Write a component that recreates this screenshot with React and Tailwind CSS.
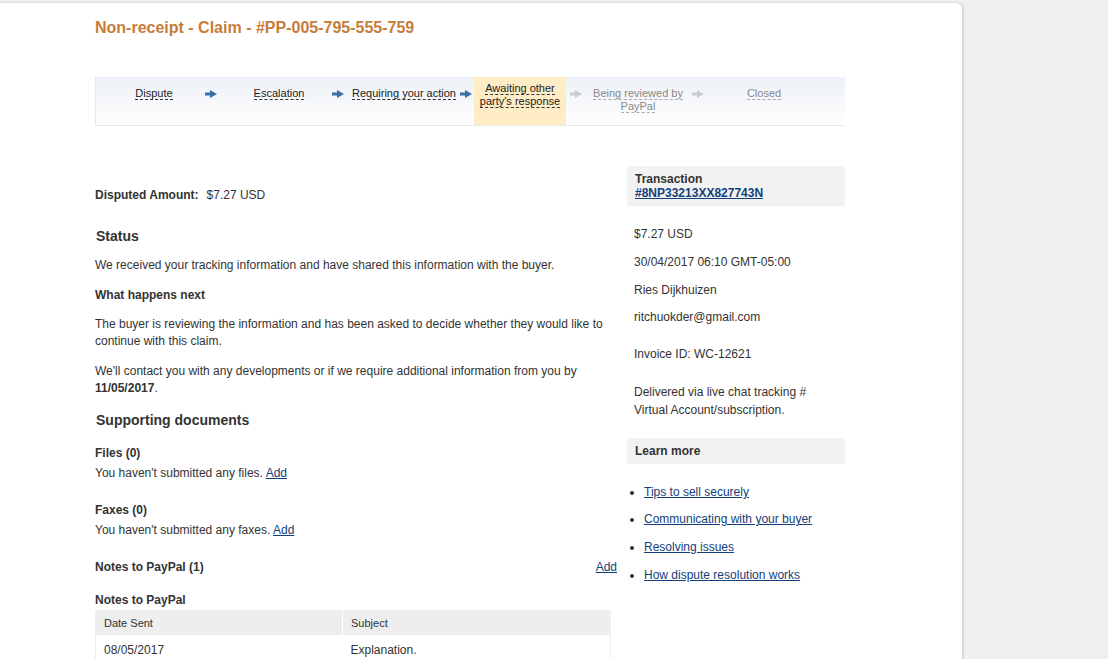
import React from 'react';

const steps = [
    { label: 'Dispute', w: 'w-[72px]', done: true },
    { arrow: true, w: 'w-[42px]', done: true },
    { label: 'Escalation', w: 'w-[94px]', done: true },
    { arrow: true, w: 'w-[24px]', done: true },
    { label: 'Requiring your action', w: 'w-[108px]', done: true },
    { arrow: true, w: 'w-[16px]', done: true },
    { label: ['Awaiting other', "party's response"], w: 'w-[92px]', done: true, current: true },
    { arrow: true, w: 'w-[20px]', done: false },
    { label: ['Being reviewed by', 'PayPal'], w: 'w-[104px]', done: false },
    { arrow: true, w: 'w-[16px]', done: false },
    { label: 'Closed', w: 'w-[116px]', done: false },
];

function Arrow({ done }) {
    const c = done ? '#3b6fa8' : '#c9ccd1';
    return (
        <svg width="12" height="8" viewBox="0 0 12 8">
            <rect x="0" y="2.5" width="6" height="3" fill={c} />
            <path d="M5 0 L12 4 L5 8 Z" fill={c} />
        </svg>
    );
}

function Step({ s }) {
    if (s.arrow) {
        return (
            <div className={`${s.w} flex justify-center pt-[13px]`}>
                <Arrow done={s.done} />
            </div>
        );
    }
    const lines = Array.isArray(s.label) ? s.label : [s.label];
    const color = s.done ? 'text-[#222] border-[#333]' : 'text-[#888] border-[#aaa]';
    return (
        <div
            className={`${s.w} flex flex-col items-center text-center text-[11px] leading-[12px] ${
                s.current ? 'bg-[#fdecc6] pt-[5px]' : 'pt-[10px]'
            }`}
        >
            {lines.map(l => (
                <span key={l} className={`border-b border-dashed ${color}`}>{l}</span>
            ))}
        </div>
    );
}

const Link = ({ children }) => (
    <a href="#" className="text-[#13407a] underline underline-offset-1">{children}</a>
);

export default function App() {
    return (
        <div className="min-h-screen bg-[#f0f0f0] pt-[3px]" style={{ fontFamily: '"Liberation Sans", Arial, sans-serif' }}>
            <div className="w-[962px] min-h-[656px] bg-white rounded-tr-[6px] shadow-[1px_0_3px_rgba(0,0,0,0.18)] pl-[95px] pt-[15px] text-[12px] text-[#333]">
                <h1 className="text-[16px] leading-[20px] font-bold text-[#c77c3a]">
                    Non-receipt - Claim - #PP-005-795-555-759
                </h1>

                <div className="mt-[39px] w-[750px] h-[49px] flex pl-[22px] border-l border-b border-[#e8e8e8] bg-gradient-to-b from-[#edf1f7] to-white">
                    {steps.map((s, i) => <Step key={i} s={s} />)}
                </div>

                <div className="mt-[40px] flex">
                    <div className="w-[520px] pt-[21px]">
                        <div className="leading-[16px]">
                            <span className="font-bold">Disputed Amount:</span>
                            <span className="ml-[8px]">$7.27 USD</span>
                        </div>

                        <h2 className="mt-[24px] pl-[1px] text-[14px] leading-[18px] font-bold">Status</h2>
                        <p className="mt-[12px] leading-[16px]">
                            We received your tracking information and have shared this information with the buyer.
                        </p>
                        <h3 className="mt-[14px] leading-[16px] font-bold">What happens next</h3>
                        <p className="mt-[13px] leading-[17px]">
                            The buyer is reviewing the information and has been asked to decide whether they would like to continue with this claim.
                        </p>
                        <p className="mt-[13px] leading-[17px] pr-[10px]">
                            We'll contact you with any developments or if we require additional information from you by{' '}
                            <span className="font-bold">11/05/2017</span>.
                        </p>

                        <h2 className="mt-[14px] pl-[1px] text-[14px] leading-[18px] font-bold">Supporting documents</h2>

                        <h3 className="mt-[16px] leading-[16px] font-bold">Files (0)</h3>
                        <p className="mt-[4px] leading-[16px]">You haven't submitted any files. <Link>Add</Link></p>

                        <h3 className="mt-[21px] leading-[16px] font-bold">Faxes (0)</h3>
                        <p className="mt-[4px] leading-[16px]">You haven't submitted any faxes. <Link>Add</Link></p>

                        <div className="mt-[21px] leading-[16px] flex justify-between mr-[-2px]">
                            <span className="font-bold">Notes to PayPal (1)</span>
                            <Link>Add</Link>
                        </div>

                        <h3 className="mt-[17px] leading-[16px] font-bold">Notes to PayPal</h3>
                        <table className="mt-[2px] w-[516px] border border-[#eee] text-left">
                            <thead>
                                <tr className="bg-[#eee] h-[24px] text-[11px]">
                                    <th className="font-normal pl-[8px] w-[247px] border-r border-white">Date Sent</th>
                                    <th className="font-normal pl-[8px]">Subject</th>
                                </tr>
                            </thead>
                            <tbody>
                                <tr className="h-[31px]">
                                    <td className="pl-[8px] pt-[1px]">08/05/2017</td>
                                    <td className="pl-[8px] pt-[1px]">Explanation.</td>
                                </tr>
                            </tbody>
                        </table>
                    </div>

                    <div className="ml-[12px] w-[218px]">
                        <div className="h-[40px] bg-[#f2f2f2] pl-[8px] pt-[6px] leading-[14px] font-bold">
                            <div>Transaction</div>
                            <Link>#8NP33213XX827743N</Link>
                        </div>
                        <div className="pl-[7px] leading-[16px]">
                            <div className="mt-[20px]">$7.27 USD</div>
                            <div className="mt-[12px]">30/04/2017 06:10 GMT-05:00</div>
                            <div className="mt-[12px]">Ries Dijkhuizen</div>
                            <div className="mt-[11px]">ritchuokder@gmail.com</div>
                            <div className="mt-[21px]">Invoice ID: WC-12621</div>
                            <div className="mt-[21px] leading-[18px]">
                                Delivered via live chat tracking #<br />Virtual Account/subscription.
                            </div>
                        </div>
                        <div className="mt-[19px] h-[26px] bg-[#f2f2f2] pl-[8px] flex items-center font-bold">
                            Learn more
                        </div>
                        <ul className="mt-[20px] pl-[17px] list-disc leading-[16px]">
                            <li><Link>Tips to sell securely</Link></li>
                            <li className="mt-[11px]"><Link>Communicating with your buyer</Link></li>
                            <li className="mt-[12px]"><Link>Resolving issues</Link></li>
                            <li className="mt-[12px]"><Link>How dispute resolution works</Link></li>
                        </ul>
                    </div>
                </div>
            </div>
        </div>
    );
}
